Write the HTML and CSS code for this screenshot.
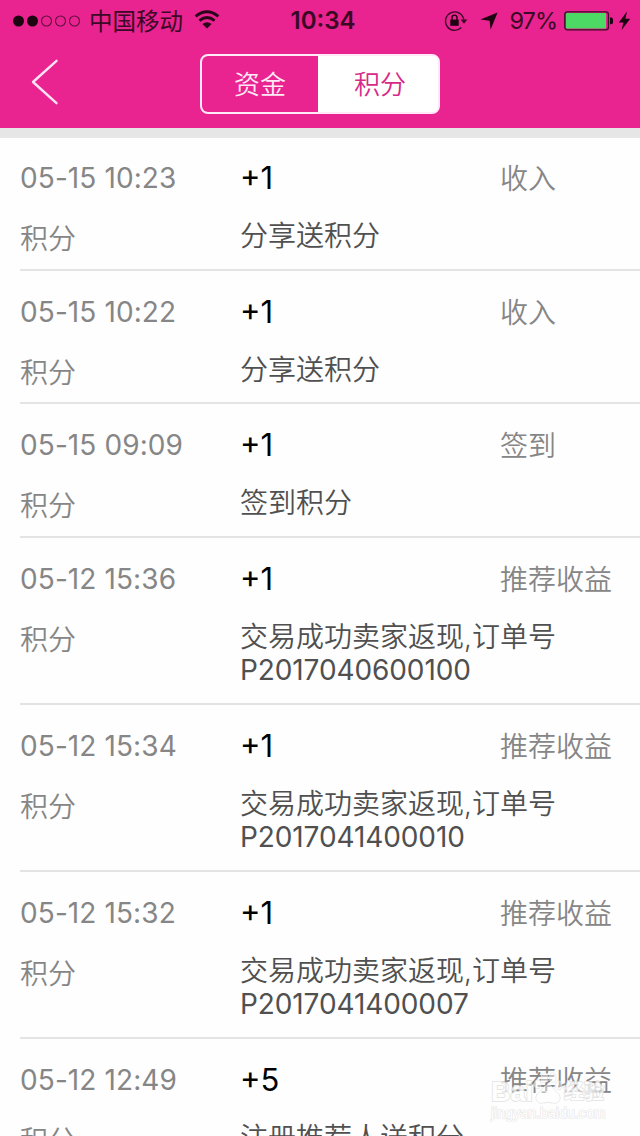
FILE: index.html
```
<!DOCTYPE html>
<html lang="zh-CN">
  <head>
    <meta charset="utf-8" />
    <title>积分</title>
    <link rel="stylesheet" href="styles.css">
  </head>
  <body>
    <div class="header">
      <div class="status">
        <div class="status-left">
          <svg class="signal" width="70" height="12" viewBox="0 0 70 12">
            <circle cx="6.5" cy="6" r="5.5" fill="#1c0411" />
            <circle cx="20.5" cy="6" r="5.5" fill="#1c0411" />
            <g fill="none" stroke="#5c0e3a" stroke-width="1.1">
              <circle cx="34.5" cy="6" r="5" />
              <circle cx="48.5" cy="6" r="5" />
              <circle cx="62.5" cy="6" r="5" />
            </g>
          </svg>
          <span class="carrier">中国移动</span>
          <svg class="wifi" width="26" height="19" viewBox="0 0 26 19">
            <g fill="none" stroke="#2b061b" stroke-width="2.8">
              <path d="M1.6 6.4Q13 -3 24.4 6.4" />
              <path d="M5.4 10.6Q13 4.4 20.6 10.6" />
            </g>
            <path d="M8.4 14Q13 10.4 17.6 14L13 18.6Z" fill="#2b061b" />
          </svg>
        </div>
        <div class="time">10:34</div>
        <div class="status-right">
          <svg class="lock" width="24" height="22" viewBox="0 0 24 22">
            <path d="M17.3 17.6A9.2 9.2 0 1 1 19.8 9.6" fill="none" stroke="#3b0925" stroke-width="1.4" />
            <path d="M16.6 9.4H23.4L20 13.8Z" fill="#3b0925" />
            <rect x="6.3" y="9.6" width="8.4" height="6.2" fill="#1c0411" />
            <path d="M8 10V7.6a2.5 2.5 0 0 1 5 0V10" fill="none" stroke="#1c0411" stroke-width="1.4" />
          </svg>
          <svg class="location" width="18" height="18" viewBox="0 0 18 18">
            <path d="M17.6 0.4L10.6 17.4L9.6 8.7L0.4 7.6Z" fill="#1c0411" />
          </svg>
          <span class="percent">97%</span>
          <svg class="battery" width="50" height="20" viewBox="0 0 50 20">
            <rect x="0.8" y="0.8" width="43.6" height="18" rx="2.6" fill="none" stroke="#3b0925" stroke-width="1.3" />
            <rect x="2" y="2" width="40" height="15.6" rx="1" fill="#4cd964" />
            <path d="M46 6.6h1q2 0 2 2v2.6q0 2-2 2h-1z" fill="#1c0411" />
          </svg>
          <svg class="bolt" width="13" height="20" viewBox="0 0 13 20">
            <path d="M9 0.6L0.8 11.4H5.4L3.6 19L12.2 7.8H7.4Z" fill="#1c0411" />
          </svg>
        </div>
      </div>
      <div class="nav">
        <svg class="back" width="28" height="46" viewBox="0 0 28 46">
          <path d="M25.5 1.8L2 23L25.5 44.2" fill="none" stroke="#ffe3f4" stroke-width="2.4" stroke-linecap="round" stroke-linejoin="round" />
        </svg>
        <div class="tabs">
          <div class="tab">资金</div>
          <div class="tab active">积分</div>
        </div>
      </div>
    </div>
    <div class="list">
      <div class="row">
        <div class="left">
          <div class="date">05-15 10:23</div>
          <div class="kind">积分</div>
        </div>
        <div class="middle">
          <div class="amount">+1</div>
          <div class="desc">分享送积分</div>
        </div>
        <div class="type">收入</div>
      </div>
      <div class="row">
        <div class="left">
          <div class="date">05-15 10:22</div>
          <div class="kind">积分</div>
        </div>
        <div class="middle">
          <div class="amount">+1</div>
          <div class="desc">分享送积分</div>
        </div>
        <div class="type">收入</div>
      </div>
      <div class="row">
        <div class="left">
          <div class="date">05-15 09:09</div>
          <div class="kind">积分</div>
        </div>
        <div class="middle">
          <div class="amount">+1</div>
          <div class="desc">签到积分</div>
        </div>
        <div class="type">签到</div>
      </div>
      <div class="row">
        <div class="left">
          <div class="date">05-12 15:36</div>
          <div class="kind">积分</div>
        </div>
        <div class="middle">
          <div class="amount">+1</div>
          <div class="desc">交易成功卖家返现,订单号<div class="order">P2017040600100</div></div>
        </div>
        <div class="type">推荐收益</div>
      </div>
      <div class="row">
        <div class="left">
          <div class="date">05-12 15:34</div>
          <div class="kind">积分</div>
        </div>
        <div class="middle">
          <div class="amount">+1</div>
          <div class="desc">交易成功卖家返现,订单号<div class="order">P2017041400010</div></div>
        </div>
        <div class="type">推荐收益</div>
      </div>
      <div class="row">
        <div class="left">
          <div class="date">05-12 15:32</div>
          <div class="kind">积分</div>
        </div>
        <div class="middle">
          <div class="amount">+1</div>
          <div class="desc">交易成功卖家返现,订单号<div class="order">P2017041400007</div></div>
        </div>
        <div class="type">推荐收益</div>
      </div>
      <div class="row">
        <div class="left">
          <div class="date">05-12 12:49</div>
          <div class="kind">积分</div>
        </div>
        <div class="middle">
          <div class="amount">+5</div>
          <div class="desc">注册推荐人送积分</div>
        </div>
        <div class="type">推荐收益</div>
      </div>
    </div>
    <div class="watermark">
      <div class="brand">
        <span class="brand-en">Bai</span>
        <svg width="30" height="34" viewBox="0 0 32 36">
          <g fill="#fff" fill-opacity="0.5" stroke="#dcdcdc" stroke-width="1">
            <ellipse cx="5" cy="13" rx="3.4" ry="4.6" />
            <ellipse cx="12" cy="6" rx="3.4" ry="5" />
            <ellipse cx="21" cy="6" rx="3.4" ry="5" />
            <ellipse cx="27.5" cy="14" rx="3.4" ry="4.6" />
            <path d="M16 14C11 14 10 19 6 22C1 26 3 34 10 33Q16 31.5 22 33C29 34 31 26 26 22C22 19 21 14 16 14Z" />
          </g>
          <text x="16" y="30" text-anchor="middle" class="du">du</text>
        </svg>
        <span class="brand-cn">经验</span>
      </div>
      <div class="site">jingyan.baidu.com</div>
    </div>
  </body>
</html>
```
FILE: styles.css
```
html,
body {
  margin: 0;
  padding: 0;
  height: 1136px;
  overflow: hidden;
}
body {
  position: relative;
  background: #fefefe;
  font-family: Inter, "Noto Sans CJK SC", sans-serif;
  font-size: 28px;
  font-weight: 350;
}
svg {
  display: block;
  flex: none;
}
.header {
  height: 128px;
  background: #e9238f;
  border-bottom: 10px solid #e6e6e6;
}
/* status bar */
.status {
  height: 41px;
  display: grid;
  grid-template-columns: 1fr auto 1fr;
  align-items: center;
  color: #3b0925;
}
.status-left,
.status-right {
  display: flex;
  align-items: center;
}
.status-left {
  padding-left: 12px;
}
.carrier {
  margin-left: 7px;
  padding-top: 2px;
  font-size: 23.5px;
  line-height: 37px;
  font-weight: 400;
}
.wifi {
  margin-left: 11px;
  margin-bottom: 2px;
}
.time {
  padding-left: 6px;
  font-size: 24px;
  font-weight: 600;
}
.status-right {
  justify-content: flex-end;
  padding-right: 9px;
}
.location {
  margin-left: 12px;
}
.percent {
  margin-left: 12px;
  font-size: 23.5px;
  font-weight: 400;
  letter-spacing: -1px;
}
.battery {
  margin-left: 7px;
}
.bolt {
  margin-left: 4px;
}
/* nav */
.nav {
  display: flex;
  align-items: center;
  height: 86px;
  padding-left: 31px;
}
.back {
  margin-top: -4px;
}
.tabs {
  display: flex;
  box-sizing: border-box;
  width: 240px;
  height: 60px;
  margin-left: 141px;
  border: 2px solid #ffe9f6;
  border-radius: 8px;
  background: #fff;
  overflow: hidden;
}
.tab {
  box-sizing: border-box;
  width: 116px;
  text-align: center;
  font-size: 26px;
  line-height: 58px;
  background: #e9238f;
  color: #ffe9f6;
}
.tab.active {
  width: 120px;
  padding-left: 4px;
  background: #fff;
  color: #d62a88;
}
/* list */
.row {
  display: grid;
  grid-template-columns: 220px 260px 1fr;
  align-items: start;
  margin-left: 20px;
  padding: 24px 0 14.75px;
  line-height: 34px;
  border-bottom: 2px solid #e4e4e4;
  color: #868686;
}
.row:first-child {
  padding-top: 23px;
}
.left {
  height: 91px;
}
.date {
  font-weight: 400;
  letter-spacing: 0.1px;
}
.kind {
  margin-top: 27px;
}
.type {
  padding-top: 1px;
}
.amount {
  font-size: 31px;
  font-weight: 400;
  color: #000;
}
.desc {
  margin-top: 25.25px;
  line-height: 33.5px;
  white-space: nowrap;
  color: #505050;
}
.order {
  font-weight: 400;
  letter-spacing: -0.1px;
}
/* watermark */
.watermark {
  position: absolute;
  left: 491px;
  top: 1068px;
  width: 118px;
  color: #fff;
  font-family: "Liberation Sans", "Noto Sans CJK SC", sans-serif;
  font-weight: 700;
  paint-order: stroke fill;
  -webkit-text-stroke: 1.6px #dcdcdc;
  opacity: 0.8;
}
.brand {
  display: flex;
  align-items: flex-end;
  height: 38px;
  font-size: 27px;
  line-height: 28px;
}
.brand-en {
  width: 42px;
}
.brand-cn {
  margin-left: 1px;
  font-size: 20px;
}
.du {
  font-size: 13px;
  fill: #fff;
}
.site {
  font-size: 14px;
  line-height: 14px;
  font-weight: 400;
  letter-spacing: 0.1px;
  -webkit-text-stroke: 1.2px #e2e2e2;
}
```
